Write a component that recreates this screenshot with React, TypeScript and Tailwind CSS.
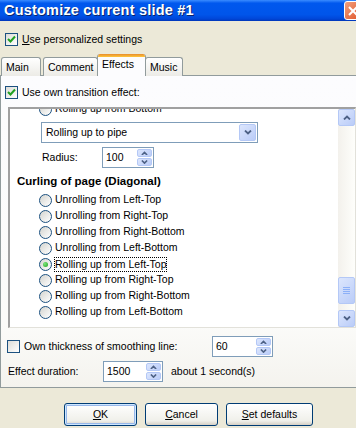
import React from "react";

const Check = ({ checked }: { checked?: boolean }) => (
  <span className="relative inline-block w-[13px] h-[13px] shrink-0 border border-[#1C5180] bg-[linear-gradient(135deg,#DCDCD7,#FFFFFF)]">
    {checked && (
      <svg className="absolute left-[1px] top-[1px]" width="9" height="9" viewBox="0 0 9 9">
        <path d="M1 4 L3.5 6.5 L8 1.5" fill="none" stroke="#21A121" strokeWidth="2" />
      </svg>
    )}
  </span>
);

const Radio = ({ checked }: { checked?: boolean }) => (
  <span className="relative inline-flex items-center justify-center w-[13px] h-[13px] shrink-0 rounded-full border border-[#1C5180] bg-[linear-gradient(135deg,#D4D4CF,#FFFFFF)]">
    {checked && <span className="w-[5px] h-[5px] rounded-full bg-[radial-gradient(circle_at_35%_35%,#7CE57A,#21A121)]" />}
  </span>
);

const Arrow = ({ up, size = 7 }: { up?: boolean; size?: number }) => (
  <svg width={size} height={size / 2 + 1} viewBox="0 0 8 5">
    <path d={up ? "M1 4.5 L4 1.5 L7 4.5" : "M1 0.5 L4 3.5 L7 0.5"} fill="none" stroke="#4D6185" strokeWidth="1.8" />
  </svg>
);

const LunaBtn = ({ className = "", children }: { className?: string; children?: React.ReactNode }) => (
  <div className={`flex items-center justify-center rounded-[2px] border border-[#B4C8F6] bg-[linear-gradient(135deg,#DCE6FD,#BACCF8)] ${className}`}>
    {children}
  </div>
);

const Spin = ({ value, w }: { value: string; w: string }) => (
  <div className={`flex h-[21px] ${w} border border-[#7F9DB9] bg-white`}>
    <span className="flex-1 pl-[3px] leading-[19px]">{value}</span>
    <div className="flex flex-col w-[16px] py-[1px] pr-[1px] gap-[1px]">
      <LunaBtn className="flex-1"><Arrow up /></LunaBtn>
      <LunaBtn className="flex-1"><Arrow /></LunaBtn>
    </div>
  </div>
);

const RadioRow = ({ label, checked }: { label: string; checked?: boolean }) => (
  <div className="flex items-center h-[16px] pl-[29px] gap-[3px]">
    <Radio checked={checked} />
    <span className={checked ? "outline outline-1 outline-dotted outline-black leading-[13px]" : ""}>{label}</span>
  </div>
);

const Tab = ({ label, active, w }: { label: string; active?: boolean; w: string }) =>
  active ? (
    <div className={`${w} h-[22px] -mx-[1px] relative z-10 border-x border-[#919B9C] bg-[#FCFCFE] rounded-t-[3px] overflow-hidden`}>
      <div className="h-[3px] bg-[linear-gradient(#E68B2C,#FFC73C)]" />
      <div className="pl-[4px] leading-[15px]">{label}</div>
    </div>
  ) : (
    <div className={`${w} h-[19px] mt-[3px] border-x border-t border-[#919B9C] rounded-t-[3px] bg-[linear-gradient(#FFFFFF,#ECEBE6)] pl-[4px] leading-[18px]`}>{label}</div>
  );

const Button = ({ children, def, w }: { children: React.ReactNode; def?: boolean; w: string }) => (
  <div
    className={`${w} h-[23px] flex items-center justify-center rounded-[3px] border border-[#003C74] bg-[linear-gradient(#FFFFFF,#F0F0EA_80%,#D6D0C5)] ${
      def ? "shadow-[inset_0_0_0_1px_#CEE7FF,inset_0_0_0_2px_#98B8EA]" : ""
    }`}
  >
    {children}
  </div>
);

export default function App() {
  const radios = [
    "Unrolling from Left-Top",
    "Unrolling from Right-Top",
    "Unrolling from Right-Bottom",
    "Unrolling from Left-Bottom",
    "Rolling up from Left-Top",
    "Rolling up from Right-Top",
    "Rolling up from Right-Bottom",
    "Rolling up from Left-Bottom",
  ];
  return (
    <div className="w-[356px] h-[428px] overflow-hidden bg-[#ECE9D8] text-[10.5px] text-black font-['Liberation_Sans',Arial,sans-serif]">
      {/* title bar */}
      <div className="h-[21px] flex items-center bg-[linear-gradient(#3A8CFF,#0058EE_15%,#0055EA_70%,#0046D8_90%,#0036B8)]">
        <span className="pl-[4px] text-[14.5px] font-bold text-white tracking-[0.2px] [text-shadow:1px_1px_0_#0A246A]">
          Customize current slide #1
        </span>
        <div className="ml-auto mr-[-10px] w-[22px] h-[19px] rounded-[3px] border border-white bg-[linear-gradient(135deg,#F0A080,#E04C1C)] flex items-center pl-[3px]">
          <svg width="10" height="10" viewBox="0 0 10 10">
            <path d="M1 1 L9 9 M9 1 L1 9" stroke="white" strokeWidth="2" />
          </svg>
        </div>
      </div>

      <div className="flex items-center gap-[4px] pl-[5px] mt-[12px] h-[13px]">
        <Check checked />
        <span><u>U</u>se personalized settings</span>
      </div>

      {/* tabs */}
      <div className="flex mt-[8px] h-[22px] pl-[1px]">
        <Tab label="Main" w="w-[40px]" />
        <div className="w-[2px]" />
        <Tab label="Comment" w="w-[55px]" />
        <Tab label="Effects" active w="w-[49px]" />
        <Tab label="Music" w="w-[38px]" />
      </div>

      {/* tab page */}
      <div className="w-[360px] h-[313px] -mt-[1px] border border-[#919B9C] bg-[linear-gradient(#FCFCFE,#FBFBF9_80%,#F4F3EE)]">
        <div className="flex items-center gap-[4px] pl-[4px] mt-[10px] h-[13px]">
          <Check checked />
          <span>Use own transition effect:</span>
        </div>

        {/* scroll box */}
        <div className="ml-[7px] mt-[8px] w-[348px] h-[221px] flex border-t-2 border-l-2 border-t-[#A0A0A0] border-l-[#A0A0A0] border-b border-r border-b-[#E2E1DA] border-r-[#E2E1DA] bg-white">
          <div className="flex-1 overflow-hidden">
            <div className="-mt-[8px]">
              <RadioRow label="Rolling up from Bottom" />
              <div className="ml-[31px] mt-[5px] w-[217px] h-[21px] flex border border-[#7F9DB9] bg-white">
                <span className="flex-1 pl-[4px] leading-[19px]">Rolling up to pipe</span>
                <LunaBtn className="w-[17px] m-[1px]"><Arrow size={8} /></LunaBtn>
              </div>
              <div className="flex items-center mt-[4px] h-[21px] pl-[32px]">
                <span className="w-[60px]">Radius:</span>
                <Spin value="100" w="w-[52px]" />
              </div>
              <div className="mt-[6px] h-[14px] pl-[7px] font-bold text-[11.5px] leading-[14px]">Curling of page (Diagonal)</div>
              <div className="mt-[4px]">
                {radios.map((r, i) => (
                  <RadioRow key={r} label={r} checked={i === 4} />
                ))}
              </div>
            </div>
          </div>
          {/* scrollbar */}
          <div className="w-[17px] flex flex-col bg-[linear-gradient(90deg,#F3F1EC,#FEFEFB)]">
            <LunaBtn className="h-[17px]"><Arrow up size={8} /></LunaBtn>
            <div className="flex-1" />
            <LunaBtn className="h-[27px] flex-col gap-[1px]">
              <div className="w-[7px] h-[1px] bg-[#8CB0F8]" />
              <div className="w-[7px] h-[1px] bg-[#8CB0F8]" />
              <div className="w-[7px] h-[1px] bg-[#8CB0F8]" />
              <div className="w-[7px] h-[1px] bg-[#8CB0F8]" />
            </LunaBtn>
            <div className="h-[6px]" />
            <LunaBtn className="h-[17px]"><Arrow size={8} /></LunaBtn>
          </div>
        </div>

        <div className="flex items-center mt-[8px] h-[21px] pl-[6px]">
          <Check />
          <span className="ml-[4px] w-[188px]">Own thickness of smoothing line:</span>
          <Spin value="60" w="w-[61px]" />
        </div>
        <div className="flex items-center mt-[4px] h-[21px] pl-[7px]">
          <span className="w-[95px]">Effect duration:</span>
          <Spin value="1500" w="w-[60px]" />
          <span className="ml-[8px]">about 1 second(s)</span>
        </div>
      </div>

      <div className="flex mt-[15px] pl-[64px] gap-[8px]">
        <Button def w="w-[73px]"><u>O</u>K</Button>
        <Button w="w-[73px]"><u>C</u>ancel</Button>
        <Button w="w-[87px]"><u>S</u>et defaults</Button>
      </div>
    </div>
  );
}
